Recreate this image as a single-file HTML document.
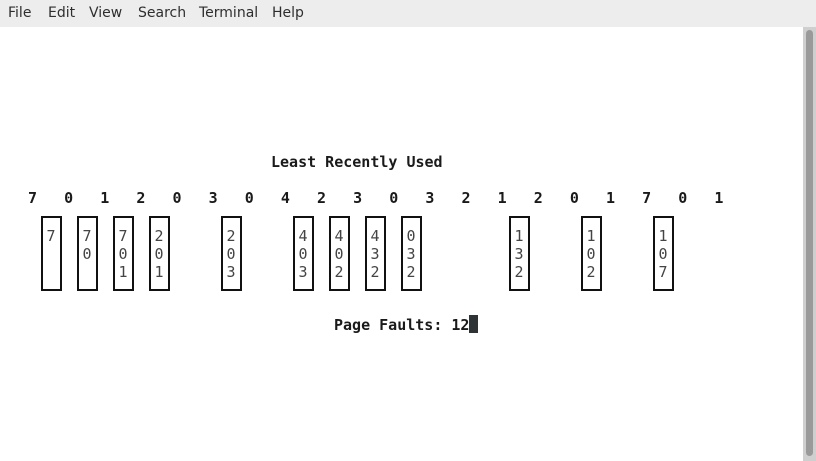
<!DOCTYPE html>
<html><head><meta charset="utf-8"><style>
body{margin:0;width:816px;height:461px;background:#fff;position:relative;overflow:hidden;font-family:"DejaVu Sans Mono","Liberation Mono",monospace;font-size:15px;color:#1a1a1a}
.menu{position:absolute;left:0;top:0;width:816px;height:27px;background:#ededed;font-family:"DejaVu Sans","Liberation Sans",sans-serif;font-size:14px;color:#2e2e2e}
.menu span{position:absolute;top:5px}
.sb{position:absolute;left:803px;top:27px;width:13px;height:434px;background:#cfcfcf}
.th{position:absolute;left:806px;top:30px;width:7px;height:426px;background:#9a9a9a;border-radius:4px}
.t{position:absolute;white-space:pre;line-height:18px}
.b{font-weight:bold}
.box{position:absolute;top:216px;width:17px;height:71px;border:2px solid #111}
.box div{position:absolute;left:2px;width:12px;text-align:center;line-height:18px;color:#444}
</style></head><body>
<div class="menu"><span style="left:8px">File</span><span style="left:48px">Edit</span><span style="left:89px">View</span><span style="left:138px">Search</span><span style="left:199px">Terminal</span><span style="left:272px">Help</span></div>
<div class="sb"></div><div class="th"></div>
<div class="t b" style="left:271px;top:153px">Least Recently Used</div>
<div class="t b" style="left:28px;top:189px">7   0   1   2   0   3   0   4   2   3   0   3   2   1   2   0   1   7   0   1</div>
<div class="box" style="left:41px"><div style="top:9px">7</div></div>
<div class="box" style="left:77px"><div style="top:9px">7</div><div style="top:27px">0</div></div>
<div class="box" style="left:113px"><div style="top:9px">7</div><div style="top:27px">0</div><div style="top:45px">1</div></div>
<div class="box" style="left:149px"><div style="top:9px">2</div><div style="top:27px">0</div><div style="top:45px">1</div></div>
<div class="box" style="left:221px"><div style="top:9px">2</div><div style="top:27px">0</div><div style="top:45px">3</div></div>
<div class="box" style="left:293px"><div style="top:9px">4</div><div style="top:27px">0</div><div style="top:45px">3</div></div>
<div class="box" style="left:329px"><div style="top:9px">4</div><div style="top:27px">0</div><div style="top:45px">2</div></div>
<div class="box" style="left:365px"><div style="top:9px">4</div><div style="top:27px">3</div><div style="top:45px">2</div></div>
<div class="box" style="left:401px"><div style="top:9px">0</div><div style="top:27px">3</div><div style="top:45px">2</div></div>
<div class="box" style="left:509px"><div style="top:9px">1</div><div style="top:27px">3</div><div style="top:45px">2</div></div>
<div class="box" style="left:581px"><div style="top:9px">1</div><div style="top:27px">0</div><div style="top:45px">2</div></div>
<div class="box" style="left:653px"><div style="top:9px">1</div><div style="top:27px">0</div><div style="top:45px">7</div></div>
<div class="t b" style="left:334px;top:316px">Page Faults: 12</div>
<div style="position:absolute;left:469px;top:315px;width:9px;height:18px;background:#2e3436"></div>
</body></html>
